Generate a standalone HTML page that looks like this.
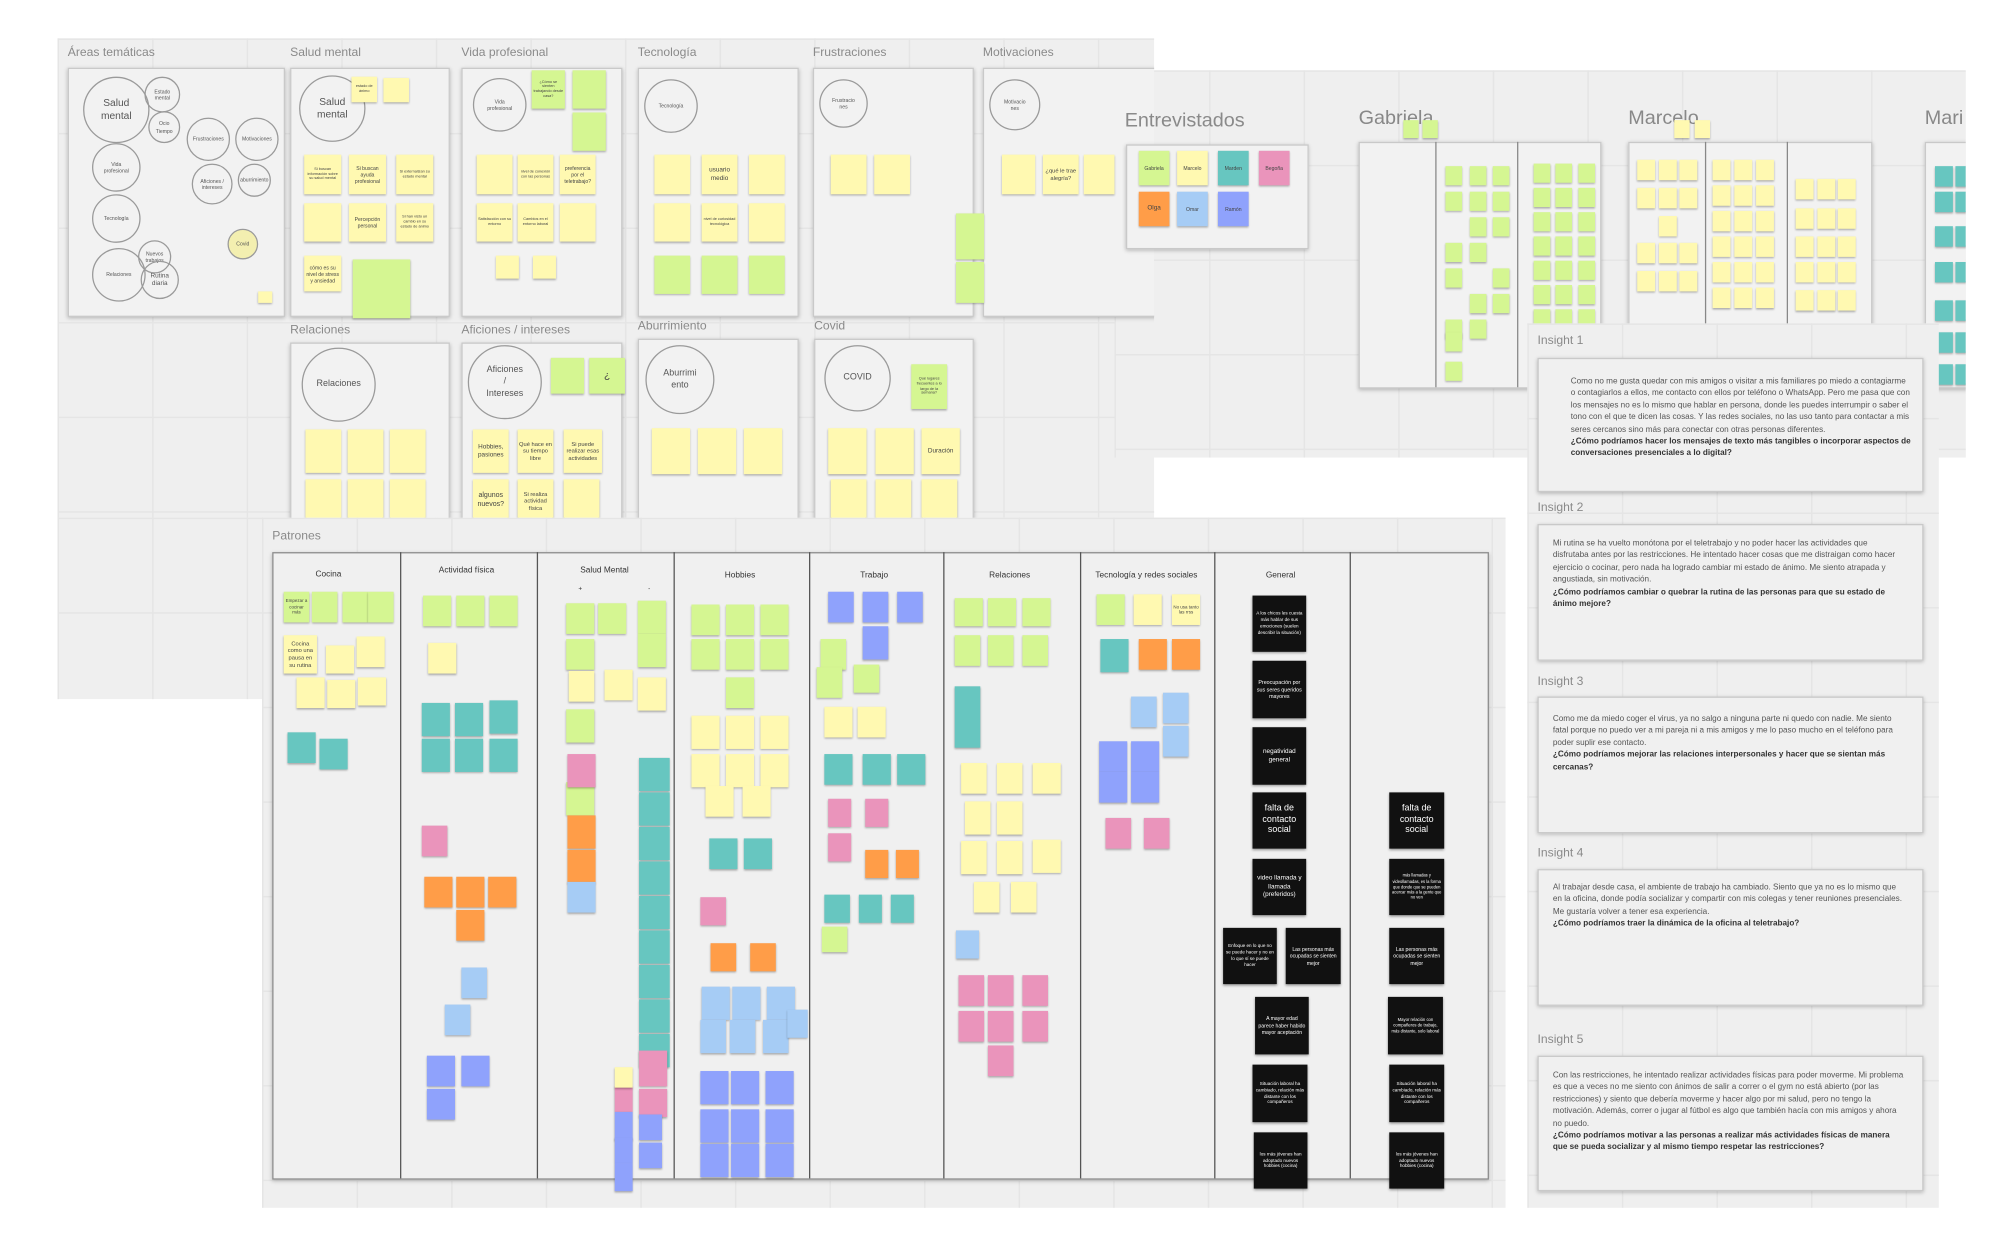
<!DOCTYPE html>
<html><head><meta charset="utf-8">
<style>
html,body{margin:0;padding:0;width:2004px;height:1235px;overflow:hidden;background:#fff;}
#s{position:absolute;left:0;top:0;width:1568px;height:966px;transform:scale(1.27806);transform-origin:0 0;font-family:"Liberation Sans",sans-serif;}
.g{position:absolute;background-color:#efefef;background-image:linear-gradient(#e5e5e5 1px,transparent 1px),linear-gradient(90deg,#e5e5e5 1px,transparent 1px);background-size:74px 74px;overflow:hidden;}
.p{position:absolute;background:#f2f2f2;border:1px solid #c9c9c9;box-shadow:0 1px 3px rgba(0,0,0,.25);}
.lb{position:absolute;color:#8a8a8a;font-size:9.5px;white-space:nowrap;}
.c{position:absolute;border:1px solid #9a9a9a;border-radius:50%;display:flex;align-items:center;justify-content:center;text-align:center;color:#555;font-size:4px;line-height:1.3;}
.n{position:absolute;box-shadow:0 1px 1.5px rgba(0,0,0,.3);display:flex;align-items:center;justify-content:center;text-align:center;color:#444;font-size:3px;line-height:1.25;overflow:hidden;padding:1px;box-sizing:border-box;}
.y{background:#fff9b1}.gr{background:#d5f692}.t{background:#67c6c0}.pk{background:#ea94bb}.o{background:#ff9d48}.lbb{background:#a6ccf5}.b{background:#8fa2fc}
.k{position:absolute;background:#111;color:#fff;display:flex;align-items:center;justify-content:center;text-align:center;font-size:3.6px;line-height:1.35;box-shadow:0 1px 2px rgba(0,0,0,.4);padding:2px;box-sizing:border-box;}
.h{position:absolute;color:#333;font-size:6.5px;white-space:nowrap;transform:translateX(-50%);}
.ins{position:absolute;background:#f0f0f0;border:1px solid #c9c9c9;box-shadow:0 1px 3px rgba(0,0,0,.25);box-sizing:border-box;font-size:6.4px;line-height:9.4px;color:#555;}
.ins b{color:#333;}
.il{position:absolute;color:#8a8a8a;font-size:9.5px;}
</style></head><body>
<div id="s">
<!-- top left gray -->
<div class="g" id="top" style="left:45px;top:30px;width:858px;height:375px;"></div>
<div class="g" style="left:45px;top:405px;width:160px;height:142px;"></div>
<div class="g" id="pat" style="left:205px;top:405px;width:973px;height:540px;"></div>
<div class="g" id="ent" style="left:872px;top:55px;width:666px;height:303px;"></div>

<!-- TOP PANELS -->
<div id="topc" style="position:absolute;left:0;top:0;width:903px;height:405px;overflow:hidden;">
<div class="lb" style="left:53px;top:36px;">Áreas temáticas</div>
<div class="lb" style="left:227px;top:36px;">Salud mental</div>
<div class="lb" style="left:361px;top:36px;">Vida profesional</div>
<div class="lb" style="left:499px;top:36px;">Tecnología</div>
<div class="lb" style="left:636px;top:36px;">Frustraciones</div>
<div class="lb" style="left:769px;top:36px;">Motivaciones</div>
<div class="lb" style="left:227px;top:253px;">Relaciones</div>
<div class="lb" style="left:361px;top:253px;">Aficiones / intereses</div>
<div class="lb" style="left:499px;top:250px;">Aburrimiento</div>
<div class="lb" style="left:637px;top:250px;">Covid</div>

<div class="p" style="left:53px;top:53px;width:168px;height:193px;"></div>
<div class="p" style="left:227px;top:53px;width:123px;height:193px;"></div>
<div class="p" style="left:361px;top:53px;width:124px;height:193px;"></div>
<div class="p" style="left:499px;top:53px;width:124px;height:193px;"></div>
<div class="p" style="left:636px;top:53px;width:124px;height:193px;"></div>
<div class="p" style="left:769px;top:53px;width:140px;height:193px;"></div>
<div class="p" style="left:227px;top:268px;width:123px;height:160px;"></div>
<div class="p" style="left:361px;top:268px;width:124px;height:160px;"></div>
<div class="p" style="left:499px;top:265px;width:124px;height:160px;"></div>
<div class="p" style="left:637px;top:265px;width:123px;height:160px;"></div>

<!-- Areas circles -->
<div class="c" style="left:65px;top:60px;width:50px;height:50px;font-size:8px;">Salud<br>mental</div>
<div class="c" style="left:113px;top:60px;width:26px;height:26px;">Estado<br>mental</div>
<div class="c" style="left:116px;top:87px;width:23px;height:23px;">Ocio<br>Tiempo</div>
<div class="c" style="left:146px;top:92px;width:32px;height:32px;">Frustraciones</div>
<div class="c" style="left:184px;top:92px;width:32px;height:32px;">Motivaciones</div>
<div class="c" style="left:72px;top:112px;width:36px;height:36px;">Vida<br>profesional</div>
<div class="c" style="left:150px;top:128px;width:30px;height:30px;">Aficiones /<br>intereses</div>
<div class="c" style="left:186px;top:128px;width:24px;height:24px;">aburrimiento</div>
<div class="c" style="left:72px;top:152px;width:36px;height:36px;">Tecnología</div>
<div class="c" style="left:178px;top:179px;width:22px;height:22px;background:#f3efb0;">Covid</div>
<div class="c" style="left:108px;top:188px;width:24px;height:24px;">Nuevos<br>trabajos</div>
<div class="c" style="left:72px;top:194px;width:40px;height:40px;">Relaciones</div>
<div class="c" style="left:110px;top:204px;width:28px;height:28px;font-size:5px;">Rutina<br>diaria</div>
<div class="n y" style="left:202px;top:228px;width:11px;height:9px;"></div>

<!-- Salud mental panel -->
<div class="c" style="left:234px;top:59px;width:50px;height:50px;font-size:8px;">Salud<br>mental</div>
<div class="n y" style="left:275px;top:60px;width:20px;height:20px;">estado de ánimo</div>
<div class="n y" style="left:300px;top:61px;width:20px;height:19px;"></div>
<div class="n y" style="left:238px;top:121px;width:29px;height:31px;">Si buscan información sobre su salud mental</div>
<div class="n y" style="left:273px;top:121px;width:29px;height:31px;font-size:4px;">Si buscan ayuda profesional</div>
<div class="n y" style="left:310px;top:121px;width:29px;height:31px;">Si externalizan su estado mental</div>
<div class="n y" style="left:238px;top:159px;width:29px;height:30px;"></div>
<div class="n y" style="left:273px;top:159px;width:29px;height:30px;font-size:4px;">Percepción personal</div>
<div class="n y" style="left:310px;top:159px;width:29px;height:30px;">Si han visto un cambio en su estado de ánimo</div>
<div class="n y" style="left:238px;top:200px;width:29px;height:28px;font-size:4px;">cómo es su nivel de stress y ansiedad</div>
<div class="n gr" style="left:276px;top:203px;width:45px;height:46px;"></div>

<!-- Vida profesional -->
<div class="c" style="left:370px;top:61px;width:40px;height:40px;">Vida<br>profesional</div>
<div class="n gr" style="left:416px;top:55px;width:26px;height:30px;">¿Cómo se sienten trabajando desde casa?</div>
<div class="n gr" style="left:448px;top:55px;width:26px;height:30px;"></div>
<div class="n gr" style="left:448px;top:88px;width:26px;height:30px;"></div>
<div class="n y" style="left:373px;top:121px;width:28px;height:31px;"></div>
<div class="n y" style="left:405px;top:121px;width:28px;height:31px;">nivel de conexión con las personas</div>
<div class="n y" style="left:438px;top:121px;width:28px;height:31px;font-size:4px;">preferencia por el teletrabajo?</div>
<div class="n y" style="left:373px;top:159px;width:28px;height:30px;">Satisfacción con su entorno</div>
<div class="n y" style="left:405px;top:159px;width:28px;height:30px;">Cambios en el entorno laboral</div>
<div class="n y" style="left:438px;top:159px;width:28px;height:30px;"></div>
<div class="n y" style="left:388px;top:200px;width:18px;height:18px;"></div>
<div class="n y" style="left:417px;top:200px;width:18px;height:18px;"></div>

<!-- Tecnologia -->
<div class="c" style="left:504px;top:62px;width:40px;height:40px;">Tecnología</div>
<div class="n y" style="left:512px;top:121px;width:28px;height:31px;"></div>
<div class="n y" style="left:549px;top:121px;width:28px;height:31px;font-size:5px;">usuario medio</div>
<div class="n y" style="left:586px;top:121px;width:28px;height:31px;"></div>
<div class="n y" style="left:512px;top:159px;width:28px;height:30px;"></div>
<div class="n y" style="left:549px;top:159px;width:28px;height:30px;">nivel de curiosidad tecnológica</div>
<div class="n y" style="left:586px;top:159px;width:28px;height:30px;"></div>
<div class="n gr" style="left:512px;top:200px;width:28px;height:30px;"></div>
<div class="n gr" style="left:549px;top:200px;width:28px;height:30px;"></div>
<div class="n gr" style="left:586px;top:200px;width:28px;height:30px;"></div>

<!-- Frustraciones -->
<div class="c" style="left:641px;top:62px;width:36px;height:36px;">Frustracio<br>nes</div>
<div class="n y" style="left:650px;top:121px;width:28px;height:31px;"></div>
<div class="n y" style="left:684px;top:121px;width:28px;height:31px;"></div>
<div class="n gr" style="left:748px;top:167px;width:22px;height:36px;"></div>
<div class="n gr" style="left:748px;top:205px;width:22px;height:32px;"></div>

<!-- Motivaciones -->
<div class="c" style="left:774px;top:62px;width:38px;height:38px;">Motivacio<br>nes</div>
<div class="n y" style="left:784px;top:121px;width:26px;height:31px;"></div>
<div class="n y" style="left:816px;top:121px;width:28px;height:31px;font-size:4.5px;">¿qué le trae alegría?</div>
<div class="n y" style="left:848px;top:121px;width:24px;height:31px;"></div>

<!-- Relaciones -->
<div class="c" style="left:236px;top:272px;width:56px;height:56px;font-size:7px;">Relaciones</div>
<div class="n y" style="left:239px;top:336px;width:28px;height:34px;"></div>
<div class="n y" style="left:272px;top:336px;width:28px;height:34px;"></div>
<div class="n y" style="left:305px;top:336px;width:28px;height:34px;"></div>
<div class="n y" style="left:239px;top:375px;width:28px;height:34px;"></div>
<div class="n y" style="left:272px;top:375px;width:28px;height:34px;"></div>
<div class="n y" style="left:305px;top:375px;width:28px;height:34px;"></div>

<!-- Aficiones -->
<div class="c" style="left:366px;top:270px;width:56px;height:56px;font-size:7px;">Aficiones<br>/<br>Intereses</div>
<div class="n gr" style="left:431px;top:280px;width:26px;height:28px;"></div>
<div class="n gr" style="left:461px;top:280px;width:28px;height:28px;font-size:8px;">¿</div>
<div class="n y" style="left:370px;top:336px;width:28px;height:34px;font-size:5px;">Hobbies, pasiones</div>
<div class="n y" style="left:405px;top:336px;width:28px;height:34px;font-size:4.5px;">Qué hace en su tiempo libre</div>
<div class="n y" style="left:441px;top:336px;width:30px;height:34px;font-size:4.5px;">Si puede realizar esas actividades</div>
<div class="n y" style="left:370px;top:375px;width:28px;height:34px;font-size:5.5px;">algunos nuevos?</div>
<div class="n y" style="left:405px;top:375px;width:28px;height:34px;font-size:4.5px;">Si realiza actividad física</div>
<div class="n y" style="left:441px;top:375px;width:28px;height:34px;"></div>

<!-- Aburrimiento -->
<div class="c" style="left:505px;top:270px;width:52px;height:52px;font-size:7px;">Aburrimi<br>ento</div>
<div class="n y" style="left:510px;top:335px;width:30px;height:36px;"></div>
<div class="n y" style="left:546px;top:335px;width:30px;height:36px;"></div>
<div class="n y" style="left:582px;top:335px;width:30px;height:36px;"></div>

<!-- Covid -->
<div class="c" style="left:645px;top:270px;width:50px;height:50px;font-size:7px;">COVID</div>
<div class="n gr" style="left:713px;top:285px;width:28px;height:35px;">Qué lugares frecuentes a lo largo de la semana?</div>
<div class="n y" style="left:648px;top:335px;width:30px;height:36px;"></div>
<div class="n y" style="left:685px;top:335px;width:30px;height:36px;"></div>
<div class="n y" style="left:721px;top:335px;width:30px;height:36px;font-size:5px;">Duración</div>
<div class="n y" style="left:650px;top:375px;width:28px;height:34px;"></div>
<div class="n y" style="left:685px;top:375px;width:28px;height:34px;"></div>
<div class="n y" style="left:721px;top:375px;width:28px;height:34px;"></div>
</div>

<!-- ENTREVISTADOS AREA -->
<div id="entc" style="position:absolute;left:872px;top:55px;width:666px;height:303px;overflow:hidden;">
<div class="lb" style="left:8px;top:31px;font-size:15.5px;">Entrevistados</div>
<div class="p" style="left:9px;top:58px;width:141px;height:80px;"></div>
<div class="n gr" style="left:19px;top:63px;width:24px;height:27px;font-size:4px;">Gabriela</div>
<div class="n y" style="left:49px;top:63px;width:24px;height:27px;font-size:4px;">Marcelo</div>
<div class="n t" style="left:81px;top:63px;width:24px;height:27px;font-size:4px;">Marden</div>
<div class="n pk" style="left:113px;top:63px;width:24px;height:27px;font-size:4px;">Begoña</div>
<div class="n o" style="left:19px;top:95px;width:24px;height:27px;font-size:5px;">Olga</div>
<div class="n lbb" style="left:49px;top:95px;width:24px;height:27px;font-size:4px;">Omar</div>
<div class="n b" style="left:81px;top:95px;width:24px;height:27px;font-size:4px;">Ramón</div>

<div class="lb" style="left:191px;top:29px;font-size:15.5px;color:#888;">Gabriela</div>
<div class="lb" style="left:402px;top:29px;font-size:15.5px;color:#888;">Marcelo</div>
<div class="lb" style="left:634px;top:29px;font-size:15.5px;color:#888;">Mari</div>
<div class="p" style="left:191px;top:56px;width:188px;height:191px;"></div>
<div style="position:absolute;left:251px;top:56px;width:1px;height:192px;background:#888"></div>
<div style="position:absolute;left:315px;top:56px;width:1px;height:192px;background:#888"></div>
<div class="p" style="left:402px;top:56px;width:189px;height:191px;"></div>
<div style="position:absolute;left:462px;top:56px;width:1px;height:192px;background:#888"></div>
<div style="position:absolute;left:526px;top:56px;width:1px;height:192px;background:#888"></div>
<div class="p" style="left:634px;top:56px;width:60px;height:191px;"></div>
<div id="entn"></div>
</div>

<div class="g" id="insg" style="left:1195px;top:253px;width:322px;height:692px;"></div>

<!-- PATRONES -->
<div class="lb" style="left:213px;top:414px;">Patrones</div>
<div style="position:absolute;left:213px;top:432px;width:950px;height:489px;background:#f0f0f0;border:1px solid #8a8a8a;box-shadow:0 1px 3px rgba(0,0,0,.25);"></div>
<div id="cols"></div>
<div class="h" style="left:257px;top:446px;">Cocina</div>
<div class="h" style="left:365px;top:443px;">Actividad física</div>
<div class="h" style="left:473px;top:443px;">Salud Mental</div>
<div class="h" style="left:579px;top:447px;">Hobbies</div>
<div class="h" style="left:684px;top:447px;">Trabajo</div>
<div class="h" style="left:790px;top:447px;">Relaciones</div>
<div class="h" style="left:897px;top:447px;">Tecnología y redes sociales</div>
<div class="h" style="left:1002px;top:447px;">General</div>
<div class="h" style="left:454px;top:458px;font-size:5px;">+</div>
<div class="h" style="left:508px;top:458px;font-size:5px;">-</div>

<div class="n y" style="left:222px;top:497px;width:26px;height:30px;font-size:4.5px;">Cocina como una pausa en su rutina</div>
<div class="n lbb" style="left:222px;top:463px;width:20px;height:24px;background:#d5f692;font-size:3.5px;">Empezar a cocinar más</div>
<div class="n y" style="left:917px;top:465px;width:22px;height:24px;font-size:3.5px;">No usa tanto las rrss</div>
<div id="pn"></div>

<!-- black stickies -->
<div class="k" style="left:980px;top:466px;width:42px;height:44px;">A los chicos les cuesta más hablar de sus emociones (suelen describir la situación)</div>
<div class="k" style="left:980px;top:517px;width:42px;height:45px;font-size:4.2px;">Preocupación por sus seres queridos mayores</div>
<div class="k" style="left:980px;top:569px;width:42px;height:45px;font-size:5px;">negatividad general</div>
<div class="k" style="left:980px;top:620px;width:42px;height:44px;font-size:7px;line-height:1.2;">falta de contacto social</div>
<div class="k" style="left:980px;top:672px;width:42px;height:44px;font-size:5px;">video llamada y llamada (preferidos)</div>
<div class="k" style="left:957px;top:726px;width:42px;height:44px;">Enfoque en lo que no se puede hacer y no en lo que sí se puede hacer</div>
<div class="k" style="left:1006px;top:726px;width:43px;height:44px;font-size:4px;">Las personas más ocupadas se sienten mejor</div>
<div class="k" style="left:982px;top:780px;width:42px;height:45px;font-size:4px;">A mayor edad parece haber habido mayor aceptación</div>
<div class="k" style="left:980px;top:833px;width:43px;height:45px;">Situación laboral ha cambiado, relación más distante con los compañeros</div>
<div class="k" style="left:981px;top:886px;width:42px;height:44px;">los más jóvenes han adoptado nuevos hobbies (cocina)</div>
<div class="k" style="left:1087px;top:620px;width:43px;height:44px;font-size:7px;line-height:1.2;">falta de contacto social</div>
<div class="k" style="left:1087px;top:672px;width:43px;height:44px;font-size:3.2px;">más llamadas y videollamadas, es la forma que donde que se pueden acercar más a la gente que no ven</div>
<div class="k" style="left:1087px;top:726px;width:43px;height:44px;font-size:4px;">Las personas más ocupadas se sienten mejor</div>
<div class="k" style="left:1086px;top:780px;width:43px;height:45px;font-size:3.3px;">Mayor relación con compañeros de trabajo, más distante, solo laboral</div>
<div class="k" style="left:1087px;top:833px;width:43px;height:45px;">Situación laboral ha cambiado, relación más distante con los compañeros</div>
<div class="k" style="left:1087px;top:886px;width:43px;height:44px;">los más jóvenes han adoptado nuevos hobbies (cocina)</div>

<!-- INSIGHTS -->
<div class="il" style="left:1203px;top:261px;">Insight 1</div>
<div class="ins" style="left:1203px;top:280px;width:302px;height:105px;padding:13px 8px 0 25px;">Como no me gusta quedar con mis amigos o visitar a mis familiares po miedo a contagiarme o contagiarlos a ellos, me contacto con ellos por teléfono o WhatsApp. Pero me pasa que con los mensajes no es lo mismo que hablar en persona, donde les puedes interrumpir o saber el tono con el que te dicen las cosas. Y las redes sociales, no las uso tanto para contactar a mis seres cercanos sino más para conectar con otras personas diferentes.<br><b>¿Cómo podríamos hacer los mensajes de texto más tangibles o incorporar aspectos de conversaciones presenciales a lo digital?</b></div>
<div class="il" style="left:1203px;top:392px;">Insight 2</div>
<div class="ins" style="left:1203px;top:410px;width:302px;height:107px;padding:10px 14px 0 11px;">Mi rutina se ha vuelto monótona por el teletrabajo y no poder hacer las actividades que disfrutaba antes por las restricciones. He intentado hacer cosas que me distraigan como hacer ejercicio o cocinar, pero nada ha logrado cambiar mi estado de ánimo. Me siento atrapada y angustiada, sin motivación.<br><b>¿Cómo podríamos cambiar o quebrar la rutina de las personas para que su estado de ánimo mejore?</b></div>
<div class="il" style="left:1203px;top:528px;">Insight 3</div>
<div class="ins" style="left:1203px;top:545px;width:302px;height:107px;padding:12px 14px 0 11px;">Como me da miedo coger el virus, ya no salgo a ninguna parte ni quedo con nadie. Me siento fatal porque no puedo ver a mi pareja ni a mis amigos y me lo paso mucho en el teléfono para poder suplir ese contacto.<br><b>¿Cómo podríamos mejorar las relaciones interpersonales y hacer que se sientan más cercanas?</b></div>
<div class="il" style="left:1203px;top:662px;">Insight 4</div>
<div class="ins" style="left:1203px;top:680px;width:302px;height:107px;padding:9px 14px 0 11px;">Al trabajar desde casa, el ambiente de trabajo ha cambiado. Siento que ya no es lo mismo que en la oficina, donde podía socializar y compartir con mis colegas y tener reuniones presenciales. Me gustaría volver a tener esa experiencia.<br><b>¿Cómo podríamos traer la dinámica de la oficina al teletrabajo?</b></div>
<div class="il" style="left:1203px;top:808px;">Insight 5</div>
<div class="ins" style="left:1203px;top:826px;width:302px;height:106px;padding:10px 14px 0 11px;">Con las restricciones, he intentado realizar actividades físicas para poder moverme. Mi problema es que a veces no me siento con ánimos de salir a correr o el gym no está abierto (por las restricciones) y siento que debería moverme y hacer algo por mi salud, pero no tengo la motivación. Además, correr o jugar al fútbol es algo que también hacía con mis amigos y ahora no puedo.<br><b>¿Cómo podríamos motivar a las personas a realizar más actividades físicas de manera que se pueda socializar y al mismo tiempo respetar las restricciones?</b></div>
</div>

<script>
(function(){
var cols=[313,420,527,633,738,845,950,1056],cd=document.getElementById('cols');
cols.forEach(function(x){var d=document.createElement('div');d.style.cssText='position:absolute;left:'+x+'px;top:432px;width:1px;height:490px;background:#555';cd.appendChild(d);});
function add(par,list,cls,w,h){list.forEach(function(a){var d=document.createElement('div');d.className='n '+cls;d.style.left=a[0]+'px';d.style.top=a[1]+'px';d.style.width=(a[2]||w)+'px';d.style.height=(a[3]||h)+'px';par.appendChild(d);});}
var pn=document.getElementById('pn');
add(pn,[[244,463],[268,463],[288,463]],'gr',20,24);
add(pn,[[255,505,22,22],[279,498,22,24],[232,530],[256,532,22,22],[280,530,22,22]],'y',22,24);
add(pn,[[225,573],[250,578]],'t',22,24);
add(pn,[[331,466],[357,466],[383,466]],'gr',22,24);
add(pn,[[335,503]],'y',22,24);
add(pn,[[330,550],[356,550],[383,548],[330,578],[356,578],[383,578]],'t',22,26);
add(pn,[[330,646,20,24]],'pk',22,24);
add(pn,[[332,686],[357,686],[382,686],[357,712]],'o',22,24);
add(pn,[[361,757,20,24],[348,786,20,24]],'lbb',22,24);
add(pn,[[334,826],[361,826],[334,852]],'b',22,24);
add(pn,[[443,472],[468,472],[499,470,22,26],[443,500],[499,496,22,26],[443,555,22,26],[443,612,22,26]],'gr',22,24);
add(pn,[[445,525,20,24],[473,524],[499,530,22,26]],'y',22,24);
add(pn,[[444,590,22,26]],'pk',22,24);
add(pn,[[444,638,22,26],[444,665,22,26]],'o',22,24);
add(pn,[[444,690]],'lbb',22,24);
for(var y=593;y<820;y+=27)add(pn,[[500,y]],'t',24,26);
add(pn,[[500,822,22,28],[500,852,22,22],[481,850,14,20]],'pk',22,26);
add(pn,[[481,835,14,16]],'y');
add(pn,[[481,870,14,22],[481,890,14,20],[500,872,18,20],[500,894,18,20],[481,910,14,22]],'b');
add(pn,[[541,473],[568,473],[595,473],[541,500],[568,500],[595,500],[568,530]],'gr',22,24);
add(pn,[[541,560],[568,560],[595,560],[541,590],[568,590],[595,590],[552,615,22,24],[581,615,22,24]],'y',22,26);
add(pn,[[555,656],[582,656]],'t',22,24);
add(pn,[[548,702,20,22]],'pk');
add(pn,[[556,738],[587,738]],'o',20,22);
add(pn,[[549,772],[573,772],[600,772],[548,798,20,26],[571,798,20,26],[597,798,20,26],[616,790,16,22]],'lbb',22,26);
add(pn,[[548,838],[572,838],[599,838],[548,868],[572,868],[599,868],[548,895],[572,895],[599,895]],'b',22,26);
add(pn,[[648,463],[675,463],[702,463],[675,490,20,26]],'b',20,24);
add(pn,[[642,500],[668,520,20,22],[639,522],[643,725,20,20]],'gr',20,24);
add(pn,[[645,553],[671,553]],'y',22,24);
add(pn,[[645,590],[675,590],[702,590],[645,700,20,22],[672,700,18,22],[697,700,18,22]],'t',22,24);
add(pn,[[648,625],[677,625],[648,652]],'pk',18,22);
add(pn,[[677,665],[701,665]],'o',18,22);
add(pn,[[747,468],[773,468],[800,468],[747,497,20,24],[773,497,20,24],[800,497,20,24]],'gr',22,22);
add(pn,[[747,537,20,48]],'t');
add(pn,[[752,597],[780,597],[808,597,22,24],[755,627,20,26],[780,627,20,26],[808,657,22,26],[752,658,20,26],[780,658,20,26],[762,690],[791,690]],'y',20,24);
add(pn,[[748,728,18,22]],'lbb');
add(pn,[[750,763],[773,763],[800,763],[750,791],[773,791],[800,791],[773,818]],'pk',20,24);
add(pn,[[858,465]],'gr',22,24);
add(pn,[[887,465]],'y',22,24);
add(pn,[[861,500,22,26]],'t');
add(pn,[[891,500],[917,500]],'o',22,24);
add(pn,[[885,545],[910,542],[910,568]],'lbb',20,24);
add(pn,[[860,580],[885,580],[860,604],[885,604]],'b',22,24);
add(pn,[[865,640],[895,640]],'pk',20,24);
var e=document.getElementById('entc');
var G=[];[1131,1150,1168].forEach(function(x,i){[75,95,115,135,155,175,195].forEach(function(y,j){if((i+j)%3!=2||j<2)G.push([x-872,y]);});});
G.push([1131-872,205],[1131-872,228]);
[1200,1217,1235].forEach(function(x){[73,92,111,130,149,168,187].forEach(function(y){G.push([x-872,y]);});});
add(e,G,'gr',13,15);
add(e,[[1098-872,39],[1113-872,39]],'gr',12,14);
var M=[];[1281,1298,1314].forEach(function(x){[70,92,114,135,157].forEach(function(y,j){if(j!=2||x==1298)M.push([x-872,y]);});});
[1340,1357,1374].forEach(function(x){[70,90,110,130,150,170].forEach(function(y){M.push([x-872,y]);});});
[1405,1422,1438].forEach(function(x){[85,108,130,150,172].forEach(function(y){M.push([x-872,y]);});});
add(e,M,'y',14,16);
add(e,[[1310-872,39],[1326-872,39]],'y',12,14);
var T=[];[1514,1530].forEach(function(x){[75,95,122,150,180,205,230].forEach(function(y){T.push([x-872,y]);});});
add(e,T,'t',14,16);
})();
</script>
</body></html>
